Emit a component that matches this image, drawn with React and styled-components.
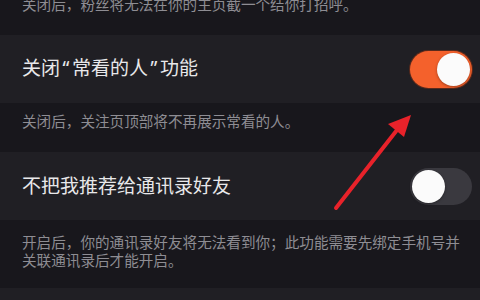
import React from 'react';
import styled, { createGlobalStyle } from 'styled-components';

const GlobalStyle = createGlobalStyle`
  html, body {
    margin: 0;
    padding: 0;
    background: #18171c;
  }
  body {
    width: 480px;
    height: 300px;
    overflow: hidden;
    font-family: "Noto Sans CJK SC", "Noto Sans", sans-serif;
  }
`;

export default function App() {
  return (
    <>
      <GlobalStyle />
      <Page>
        <Note $first>关闭后，粉丝将无法在你的主页截一个结你打招呼。</Note>
        <Row>
          <Title>关闭<Quote>“</Quote>常看的人<Quote>”</Quote>功能</Title>
          <Toggle $on><Knob $on /></Toggle>
        </Row>
        <Note>关闭后，关注页顶部将不再展示常看的人。</Note>
        <Row>
          <Title>不把我推荐给通讯录好友</Title>
          <Toggle><Knob /></Toggle>
        </Row>
        <Note $tall>开启后，你的通讯录好友将无法看到你；此功能需要先绑定手机号并关联通讯录后才能开启。</Note>
        <Row $short />
        <Arrow width="480" height="300" viewBox="0 0 480 300">
          <line x1="336" y1="208" x2="397" y2="130" stroke="#e8222a" strokeWidth="4" strokeLinecap="round" />
          <polygon points="411,115 388,124 404,137" fill="#e8222a" />
        </Arrow>
      </Page>
    </>
  );
}

const Page = styled.div`
  position: relative;
  width: 480px;
  height: 300px;
  overflow: hidden;
  background: #18171c;
`;

const Note = styled.div`
  box-sizing: border-box;
  height: ${p => (p.$tall ? '68px' : '49px')};
  margin-top: ${p => (p.$first ? '-14px' : '0')};
  padding: ${p => (p.$tall ? '13px 16px 0 22px' : '9px 16px 0 22px')};
  font-size: 14.6px;
  line-height: 18px;
  color: #8e8d93;
`;

const Row = styled.div`
  display: flex;
  align-items: center;
  justify-content: space-between;
  height: ${p => (p.$short ? '14px' : '68px')};
  padding: 0 8px 0 22px;
  background: #201f24;
`;

const Title = styled.div`
  font-size: 19px;
  line-height: 24px;
  margin-top: -3px;
  color: #e8e8ea;
`;

const Quote = styled.span`
  font-family: "Noto Sans", sans-serif;
  display: inline-block;
  width: 12px;
  text-align: center;
`;

const Toggle = styled.div`
  display: flex;
  align-items: center;
  justify-content: ${p => (p.$on ? 'flex-end' : 'flex-start')};
  box-sizing: border-box;
  width: 62px;
  height: 37px;
  padding: 2px;
  border-radius: 19px;
  background: ${p => (p.$on ? '#f4612c' : '#3a393f')};
  box-shadow: ${p => (p.$on ? '0 0 0 1px #5a2a1c' : 'none')};
`;

const Knob = styled.div`
  width: 33px;
  height: 33px;
  border-radius: 50%;
  background: #fbfbfb;
  box-shadow: 0 1px 3px rgba(0, 0, 0, 0.35);
`;

const Arrow = styled.svg`
  position: absolute;
  left: 0;
  top: 0;
  pointer-events: none;
`;
